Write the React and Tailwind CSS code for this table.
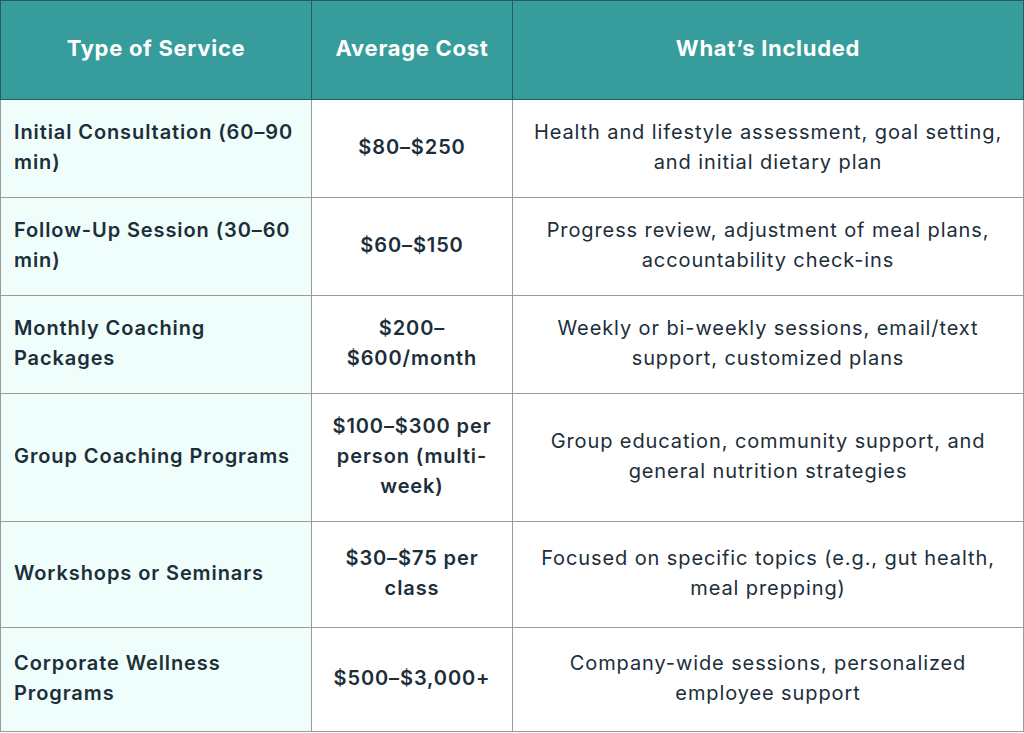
import React from "react";

const rows = [
  { h: "h-[98px]", s: ["Initial Consultation (60–90", "min)"], c: ["$80–$250"], i: ["Health and lifestyle assessment, goal setting,", "and initial dietary plan"] },
  { h: "h-[98px]", s: ["Follow-Up Session (30–60", "min)"], c: ["$60–$150"], i: ["Progress review, adjustment of meal plans,", "accountability check-ins"] },
  { h: "h-[98px]", s: ["Monthly Coaching", "Packages"], c: ["$200–", "$600/month"], i: ["Weekly or bi-weekly sessions, email/text", "support, customized plans"] },
  { h: "h-[128px]", s: ["Group Coaching Programs"], c: ["$100–$300 per", "person (multi-", "week)"], i: ["Group education, community support, and", "general nutrition strategies"] },
  { h: "h-[106px]", s: ["Workshops or Seminars"], c: ["$30–$75 per", "class"], i: ["Focused on specific topics (e.g., gut health,", "meal prepping)"] },
  { h: "h-[104px]", s: ["Corporate Wellness", "Programs"], c: ["$500–$3,000+"], i: ["Company-wide sessions, personalized", "employee support"] },
];

const Lines = ({ lines }) => (
  <>
    {lines.map((l, k) => (
      <div key={k} className="whitespace-nowrap">{l}</div>
    ))}
  </>
);

export default function App() {
  return (
    <div className="w-[1024px] h-[733px] bg-white" style={{ fontFamily: "Inter, 'Noto Sans', sans-serif" }}>
      <table className="w-[1023px] border-collapse table-fixed text-[#1c2e3a]">
        <colgroup>
          <col className="w-[311px]" />
          <col className="w-[201px]" />
          <col className="w-[511px]" />
        </colgroup>
        <thead>
          <tr className="h-[99px] bg-[#369c9c] text-white text-[22px] font-semibold tracking-[0.7px]">
            <th className="border border-[#1f5e5d] text-center align-middle pb-[4px]">Type of Service</th>
            <th className="border border-[#1f5e5d] text-center align-middle pb-[4px]">Average Cost</th>
            <th className="border border-[#1f5e5d] text-center align-middle pb-[4px]">What’s Included</th>
          </tr>
        </thead>
        <tbody className="text-[20px] leading-[30px] tracking-[0.9px]">
          {rows.map((r, idx) => (
            <tr key={idx} className={r.h}>
              <td className="border border-[#9a9a9a] bg-[#effefb] pl-[13px] pr-2 align-middle font-semibold pb-[4px]">
                <Lines lines={r.s} />
              </td>
              <td className="border border-[#9a9a9a] text-center align-middle font-semibold pb-[4px]">
                <Lines lines={r.c} />
              </td>
              <td className="border border-[#9a9a9a] text-center align-middle pb-[4px]">
                <Lines lines={r.i} />
              </td>
            </tr>
          ))}
        </tbody>
      </table>
    </div>
  );
}
